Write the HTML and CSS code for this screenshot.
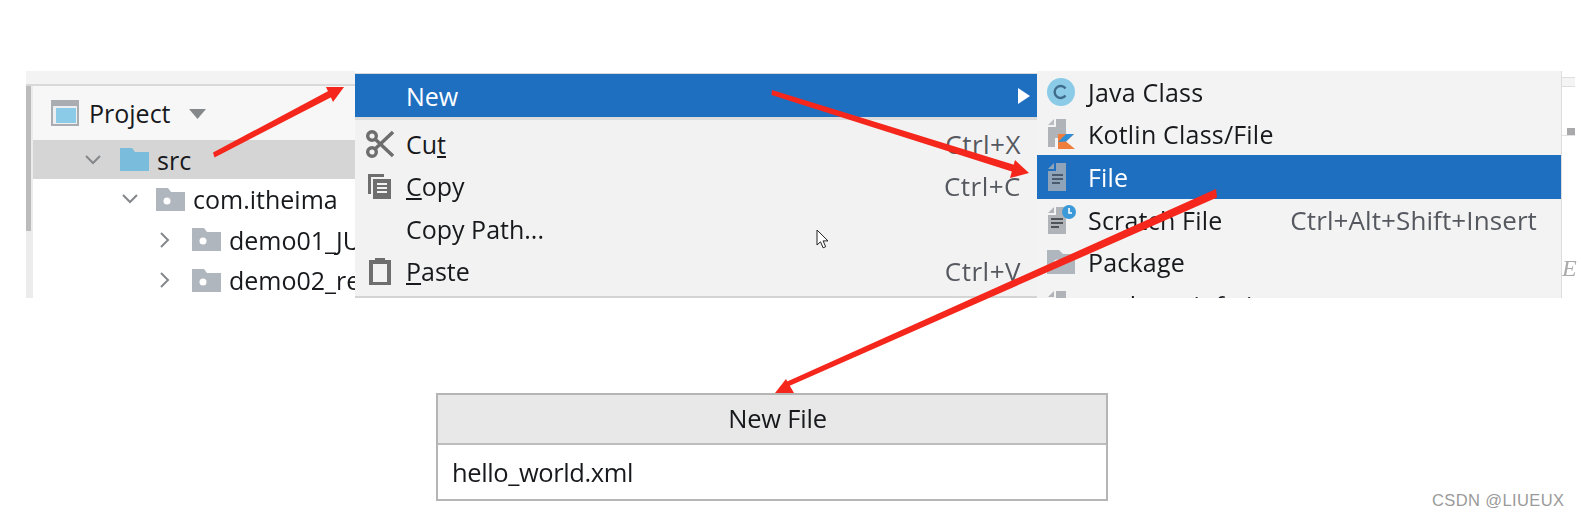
FILE: index.html
```html
<!DOCTYPE html>
<html lang="en">
<head>
<meta charset="utf-8">
<title>New File</title>
<link rel="stylesheet" href="styles.css">
</head>
<body>
<main class="page">
  <section class="ide">
    <aside class="panel">
      <div class="panel-strip"></div>
      <div class="panel-body">
        <div class="gutter"><div class="thumb"></div></div>
        <div class="panel-main">
          <div class="panel-head">
            <svg class="ico-project" viewBox="0 0 28 26"><rect x="1" y="1" width="26" height="24" fill="#eceef0" stroke="#a9adb2" stroke-width="2"/><rect x="2" y="2" width="24" height="4" fill="#a9adb2"/><rect x="5" y="8" width="20" height="15" fill="#8ccbe8"/></svg>
            <span class="head-title">Project</span>
            <svg class="ico-drop" viewBox="0 0 17 10"><path d="M0 0h17l-8.500 10z" fill="#85888b"/></svg>
          </div>
          <div class="tree-row selected lvl0">
            <svg class="chev" viewBox="0 0 16 16"><path d="M1 4l7 7 7-7" fill="none" stroke="#85888b" stroke-width="2"/></svg>
            <svg class="folder" viewBox="0 0 29 23"><path d="M0 0h12l3 4h14v19H0z" fill="#79bcdc"/></svg>
            <span>src</span>
          </div>
          <div class="tree-row lvl1">
            <svg class="chev" viewBox="0 0 16 16"><path d="M1 4l7 7 7-7" fill="none" stroke="#85888b" stroke-width="2"/></svg>
            <svg class="folder" viewBox="0 0 29 23"><path d="M0 0h12l3 4h14v19H0z" fill="#b0b6bd"/><circle cx="11" cy="13" r="3.500" fill="#fff"/></svg>
            <span>com.itheima</span>
          </div>
          <div class="tree-row lvl2">
            <svg class="chev" viewBox="0 0 16 16"><path d="M4 1l7 7-7 7" fill="none" stroke="#85888b" stroke-width="2"/></svg>
            <svg class="folder" viewBox="0 0 29 23"><path d="M0 0h12l3 4h14v19H0z" fill="#b0b6bd"/><circle cx="11" cy="13" r="3.500" fill="#fff"/></svg>
            <span>demo01_JUnit</span>
          </div>
          <div class="tree-row lvl2">
            <svg class="chev" viewBox="0 0 16 16"><path d="M4 1l7 7-7 7" fill="none" stroke="#85888b" stroke-width="2"/></svg>
            <svg class="folder" viewBox="0 0 29 23"><path d="M0 0h12l3 4h14v19H0z" fill="#b0b6bd"/><circle cx="11" cy="13" r="3.500" fill="#fff"/></svg>
            <span>demo02_reflect</span>
          </div>
        </div>
      </div>
    </aside>

    <div class="menu">
      <div class="menu-item active first">
        <span class="m-icon"></span><span class="m-label">New</span>
        <svg class="sub-arrow" viewBox="0 0 12 16"><path d="M0 0l12 8-12 8z" fill="#fff"/></svg>
      </div>
      <div class="menu-sep"></div>
      <div class="menu-item">
        <span class="m-icon"><svg class="ico-cut" viewBox="0 0 28 28"><g fill="none" stroke="#6e6e6e" stroke-width="3.400"><circle cx="6" cy="6" r="4.300"/><circle cx="6" cy="22" r="4.300"/><path d="M9 9l18 17M9 19L27 2"/></g></svg></span>
        <span class="m-label">Cu<u>t</u></span><span class="m-key">Ctrl+X</span>
      </div>
      <div class="menu-item">
        <span class="m-icon"><svg class="ico-copy" viewBox="0 0 25 27"><path d="M1 1h16v3H4v17H1z" fill="#6e6e6e"/><rect x="6" y="6" width="18" height="20" fill="#6e6e6e"/><path d="M10 11h10M10 15h10M10 19h10" stroke="#f2f2f2" stroke-width="2"/></svg></span>
        <span class="m-label"><u>C</u>opy</span><span class="m-key">Ctrl+C</span>
      </div>
      <div class="menu-item">
        <span class="m-icon"></span><span class="m-label">Copy Path...</span>
      </div>
      <div class="menu-item">
        <span class="m-icon"><svg class="ico-paste" viewBox="0 0 22 28"><path d="M2 5h18v22H2z" fill="none" stroke="#6e6e6e" stroke-width="4"/><path d="M6 1h10v6H6z" fill="#6e6e6e"/></svg></span>
        <span class="m-label"><u>P</u>aste</span><span class="m-key">Ctrl+V</span>
      </div>
    </div>

    <div class="submenu">
      <div class="sub-item top">
        <svg class="s-icon" viewBox="0 0 30 30"><circle cx="15" cy="15" r="14" fill="#8ccbe8"/><path d="M19.500 11.500a6 6 0 1 0 0 7" fill="none" stroke="#3f6d8a" stroke-width="2.400"/></svg>
        <span class="s-label">Java Class</span>
      </div>
      <div class="sub-item">
        <svg class="s-icon" viewBox="0 0 30 30"><path d="M8 0v6H2z" fill="#b9bdc1"/><path d="M10 0h10v19H9v9H2V8h8z" fill="#b0b4b9"/><path d="M12 15h16l-8 7.500 9 7.500H12z" fill="#ef7d3c"/><path d="M12 23l8-8h8l-8 7.500z" fill="#2f8fd6"/></svg>
        <span class="s-label">Kotlin Class/File</span>
      </div>
      <div class="sub-item active">
        <svg class="s-icon" viewBox="0 0 30 30"><path d="M8 1v6H2z" fill="#8fa3b9"/><path d="M10 1h10v28H2V9h8z" fill="#8fa3b9"/><path d="M6 13h11M6 17h11M6 21h8" stroke="#4a5a6c" stroke-width="2"/></svg>
        <span class="s-label">File</span>
      </div>
      <div class="sub-item">
        <svg class="s-icon" viewBox="0 0 30 30"><path d="M8 2v6H2z" fill="#b0b4b9"/><path d="M10 2h10v27H2V10h8z" fill="#b0b4b9"/><path d="M5 14h12M5 18h12M5 22h8" stroke="#4f5459" stroke-width="2"/><circle cx="23" cy="7" r="7" fill="#3d9ad9"/><path d="M23 3v5h3" fill="none" stroke="#fff" stroke-width="1.600"/></svg>
        <span class="s-label">Scratch File</span><span class="s-key">Ctrl+Alt+Shift+Insert</span>
      </div>
      <div class="sub-item">
        <svg class="s-icon" viewBox="0 0 30 30"><path d="M1 3h12l4 4h12v20H1z" fill="#b0b6bd"/><circle cx="11" cy="16" r="3.500" fill="#f2f2f2"/></svg>
        <span class="s-label">Package</span>
      </div>
      <div class="sub-item">
        <svg class="s-icon" viewBox="0 0 30 30"><path d="M8 1v6H2z" fill="#b0b4b9"/><path d="M10 1h10v28H2V9h8z" fill="#b0b4b9"/></svg>
        <span class="s-label">package-info.java</span>
      </div>
    </div>

    <div class="edge">
      <div class="edge-tabs"></div>
      <div class="edge-mark"><span class="edge-block"></span></div>
      <div class="edge-glyph">E</div>
    </div>
  </section>

  <section class="dialog">
    <div class="dialog-title">New File</div>
    <div class="dialog-input">hello_world.xml</div>
  </section>

  <div class="watermark">CSDN @LIUEUX</div>

  <svg class="cursor" viewBox="0 0 13 20"><path d="M1 1v15l3.500-3.200 2.600 6 2.600-1.100-2.600-5.800H12z" fill="#fff" stroke="#222" stroke-width="1"/></svg>

  <svg class="arrows" viewBox="0 0 1581 518">
    <g fill="#f5261b">
      <path d="M213 152.500l120-64 3.500 6-122 63z"/>
      <path d="M326 87h18l-11 15z"/>
      <path d="M772 90l246 76-1.500 7-245-78z"/>
      <path d="M1015 160l14 13-19 5z"/>
      <path d="M1216 189l-430 193 2 4.500 429-189z"/>
      <path d="M775 393l11-14 8 14z"/>
    </g>
  </svg>
</main>
</body>
</html>
```
FILE: styles.css
```css
* { box-sizing: border-box; }
html, body { margin: 0; padding: 0; background: #fff; }
body { font-family: "Open Sans", "Noto Sans", "Liberation Sans", sans-serif; color: #17191c; }
.page { position: relative; width: 1581px; height: 518px; padding-top: 71px; overflow: hidden; }

.ide { display: flex; height: 227px; margin-left: 26px; overflow: hidden; font-size: 25px; filter: blur(.35px); }

.panel { width: 329px; flex: none; display: flex; flex-direction: column; }
.panel-strip { height: 15px; background: #f3f3f3; border-bottom: 2px solid #d9d9d9; }
.panel-body { flex: 1; display: flex; min-height: 0; }
.gutter { width: 7px; flex: none; background: #ececec; }
.thumb { width: 5px; height: 145px; background: #bcbcbc; }
.panel-main { flex: 1; min-width: 0; overflow: hidden; }
.panel-head { height: 54px; background: #f7f7f7; display: flex; align-items: center; padding-left: 18px; }
.ico-project { width: 28px; height: 26px; margin-right: 10px; }
.ico-drop { width: 17px; height: 10px; margin: 2px 0 0 18px; }
.tree-row { height: 40.500px; display: flex; align-items: center; white-space: nowrap; }
.tree-row.selected { height: 39px; background: #d5d5d5; }
.chev { width: 16px; height: 16px; flex: none; }
.folder { width: 29px; height: 23px; flex: none; margin-right: 8px; }
.lvl0 { padding-left: 52px; }
.lvl0 .chev { margin-right: 19px; }
.lvl1 { padding-left: 89px; }
.lvl1 .chev { margin-right: 18px; }
.lvl2 { padding-left: 124px; }
.lvl2 .chev { margin-right: 19px; }

.menu { width: 682px; flex: none; height: 225px; margin-top: 2px; background: #f2f2f3; border-bottom: 2px solid #d4d4d4; border-top: 1px solid #d8d8d8; }
.menu-item { height: 42.500px; display: flex; align-items: center; padding-right: 16px; }
.menu-item.first { height: 43px; }
.menu-item.active { background: #1f6fc1; color: #fff; padding-right: 7px; }
.menu-sep { height: 5.500px; border-top: 3px solid #dcdcdc; }
.m-icon { width: 51px; flex: none; display: flex; justify-content: center; padding-right: 2px; }
.m-label { flex: 1; }
.m-key { color: #55595f; font-size: 26px; letter-spacing: .5px; }
.sub-arrow { width: 12px; height: 16px; }
.ico-cut { width: 28px; height: 28px; }
.ico-copy { width: 25px; height: 27px; }
.ico-paste { width: 22px; height: 28px; }

.submenu { width: 524px; flex: none; background: #f3f3f3; }
.sub-item { height: 42.500px; display: flex; align-items: center; padding: 0 24px 0 9px; white-space: nowrap; }
.sub-item.top { height: 41.500px; }
.sub-item.active { height: 43.500px; background: #1f6fc1; color: #fff; }
.s-icon { width: 30px; height: 30px; flex: none; margin-right: 12px; }
.s-label { flex: 1; letter-spacing: .2px; }
.s-key { color: #55595f; font-size: 26px; letter-spacing: .1px; }

.edge { width: 20px; flex: none; border-left: 1px solid #dcdcdc; display: flex; flex-direction: column; }
.edge-tabs { height: 10px; margin: 6px 6px 0 0; background: #f4f4f4; border-top: 1px solid #dedede; border-bottom: 1px solid #dedede; }
.edge-mark { height: 49px; margin-right: 6px; border-bottom: 1px solid #e2e2e2; display: flex; justify-content: flex-end; align-items: flex-end; }
.edge-block { width: 8px; height: 7px; background: #a9a9ad; }
.edge-glyph { margin-top: 120px; font: italic 24px "Liberation Serif", serif; color: #aaa; line-height: 24px; }

.dialog { width: 672px; height: 108px; margin: 95px 0 0 436px; background: #fff; border: 2px solid #b5b5b5; display: flex; flex-direction: column; font-size: 25.500px; filter: blur(.35px); }
.dialog-title { height: 50px; flex: none; background: #e8e8e8; border-bottom: 2px solid #bcbcbc; display: flex; align-items: center; justify-content: center; letter-spacing: -.2px; padding: 0 0 2px 11px; }
.dialog-input { flex: 1; display: flex; align-items: center; padding-left: 14px; letter-spacing: -.4px; }

.watermark { position: absolute; left: 1432px; top: 491px; font: 16.500px "Liberation Sans", sans-serif; color: #9a9a9a; letter-spacing: .4px; }
.cursor { position: absolute; left: 816px; top: 229px; width: 13px; height: 20px; }
.arrows { position: absolute; left: 0; top: 0; width: 1581px; height: 518px; pointer-events: none; }
```
